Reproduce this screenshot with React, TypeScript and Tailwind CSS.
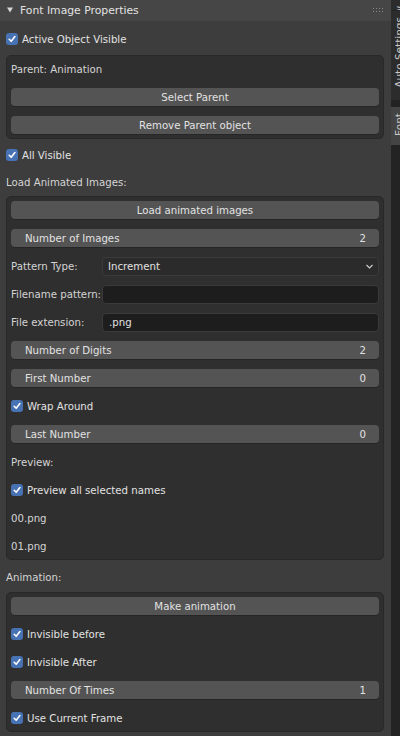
import { ReactNode } from "react"

const Check = ({ label }: { label: string }) => (
    <div className="flex h-[20px] items-center gap-[4px]">
        <span className="flex h-[12px] w-[12px] shrink-0 items-center justify-center rounded-[3px] bg-[#4772b3]">
            <svg width="10" height="10" viewBox="0 0 10 10">
                <path d="M2.2 5.3 L4.2 7.3 L7.9 2.6" stroke="#ffffff" strokeWidth="1.6" fill="none" strokeLinecap="round" strokeLinejoin="round" />
            </svg>
        </span>
        <span className="pt-[2px] text-[#e2e2e2]">{label}</span>
    </div>
)

const Button = ({ label }: { label: string }) => (
    <div className="flex h-[20px] items-center">
        <div className="flex h-[18px] w-full items-center justify-center rounded-[4px] bg-[#545454] pt-[2px] text-[#e2e2e2] shadow-[0_1px_0_#262626]">
            {label}
        </div>
    </div>
)

const Slider = ({ label, value }: { label: string; value: string }) => (
    <div className="flex h-[20px] items-center">
        <div className="flex h-[18px] w-full items-center justify-between rounded-[4px] bg-[#545454] pl-[14px] pr-[13px] pt-[2px] text-[#e2e2e2] shadow-[0_1px_0_#262626]">
            <span>{label}</span>
            <span>{value}</span>
        </div>
    </div>
)

const Label = ({ children }: { children: ReactNode }) => (
    <div className="flex h-[20px] items-center pt-[2px] text-[#d4d4d4]">{children}</div>
)

const Field = ({ label, children, dropdown }: { label: string; children?: ReactNode; dropdown?: boolean }) => (
    <div className="flex h-[20px] items-center">
        <span className="w-[91px] shrink-0 whitespace-nowrap pt-[2px] text-[#d4d4d4]">{label}</span>
        <div
            className={
                dropdown
                    ? "flex h-[19px] flex-1 items-center justify-between rounded-[4px] border border-[#3a3a3a] bg-[#2b2b2b] pl-[5px] pr-[4px] text-[#e2e2e2]"
                    : "flex h-[19px] flex-1 items-center rounded-[4px] border border-[#3a3a3a] bg-[#1d1d1d] pl-[6px] text-[#e2e2e2]"
            }
        >
            <span className="pt-[2px]">{children}</span>
            {dropdown && (
                <svg width="9" height="7" viewBox="0 0 9 7">
                    <path d="M1.5 2 L4.5 5 L7.5 2" stroke="#cfcfcf" strokeWidth="1.1" fill="none" />
                </svg>
            )}
        </div>
    </div>
)

const Box = ({ children }: { children: ReactNode }) => (
    <div className="ml-[6px] mr-[7px] flex flex-col gap-[8px] rounded-[5px] border border-[#282828] bg-[#2f2f2f] px-[4px] py-[3px]">
        {children}
    </div>
)

const Tab = ({ label, h, active }: { label: string; h: string; active?: boolean }) => (
    <div className={`${h} ${active ? "bg-[#444444]" : "bg-[#2c2c2c]"} flex items-start overflow-hidden pl-[2px] pt-[6px]`}>
        <span className="rotate-180 whitespace-nowrap text-[10.5px] leading-[13px] text-[#c8c8c8] [writing-mode:vertical-rl]">
            {label}
        </span>
    </div>
)

export default function App() {
    return (
        <div className="flex h-[736px] w-[400px] overflow-hidden bg-[#3d3d3d] font-['DejaVu_Sans',sans-serif] text-[10.2px] leading-none">
            <div className="flex w-[391px] flex-col">
                <div className="flex h-[21px] shrink-0 items-center justify-between bg-[#464646] pl-[7px] pr-[8px]">
                    <div className="flex items-center gap-[7px]">
                        <svg width="6" height="6" viewBox="0 0 6 6">
                            <path d="M0 0.5 L6 0.5 L3 5.5 Z" fill="#d6d6d6" />
                        </svg>
                        <span className="pt-[2px] text-[10.8px] text-[#e2e2e2]">Font Image Properties</span>
                    </div>
                    <svg width="10" height="5" viewBox="0 0 10 5">
                        {[0, 3, 6, 9].map((x) =>
                            [0, 3].map((y) => <rect key={`${x}-${y}`} x={x} y={y} width="1" height="1" fill="#8a8a8a" />)
                        )}
                    </svg>
                </div>

                <div className="px-[6px] pt-[8px]">
                    <Check label="Active Object Visible" />
                </div>

                <div className="mt-[6px]">
                    <Box>
                        <Label>Parent: Animation</Label>
                        <Button label="Select Parent" />
                        <Button label="Remove Parent object" />
                    </Box>
                </div>

                <div className="mt-[6px] px-[6px]">
                    <Check label="All Visible" />
                </div>
                <div className="mt-[7px] px-[6px]">
                    <Label>Load Animated Images:</Label>
                </div>

                <div className="mt-[4px]">
                    <Box>
                        <Button label="Load animated images" />
                        <Slider label="Number of Images" value="2" />
                        <Field label="Pattern Type:" dropdown>
                            Increment
                        </Field>
                        <Field label="Filename pattern:" />
                        <Field label="File extension:">.png</Field>
                        <Slider label="Number of Digits" value="2" />
                        <Slider label="First Number" value="0" />
                        <Check label="Wrap Around" />
                        <Slider label="Last Number" value="0" />
                        <Label>Preview:</Label>
                        <Check label="Preview all selected names" />
                        <Label>00.png</Label>
                        <Label>01.png</Label>
                    </Box>
                </div>

                <div className="mt-[7px] px-[6px]">
                    <Label>Animation:</Label>
                </div>

                <div className="mt-[5px]">
                    <Box>
                        <Button label="Make animation" />
                        <Check label="Invisible before" />
                        <Check label="Invisible After" />
                        <Slider label="Number Of Times" value="1" />
                        <Check label="Use Current Frame" />
                    </Box>
                </div>
            </div>

            <div className="flex w-[9px] flex-col bg-[#232323]">
                <Tab label="View" h="h-[10px]" />
                <div className="h-[1px]" />
                <Tab label="Auto Settings" h="h-[89px]" />
                <div className="h-[7px]" />
                <Tab label="Font" h="h-[38px]" active />
            </div>
        </div>
    )
}
